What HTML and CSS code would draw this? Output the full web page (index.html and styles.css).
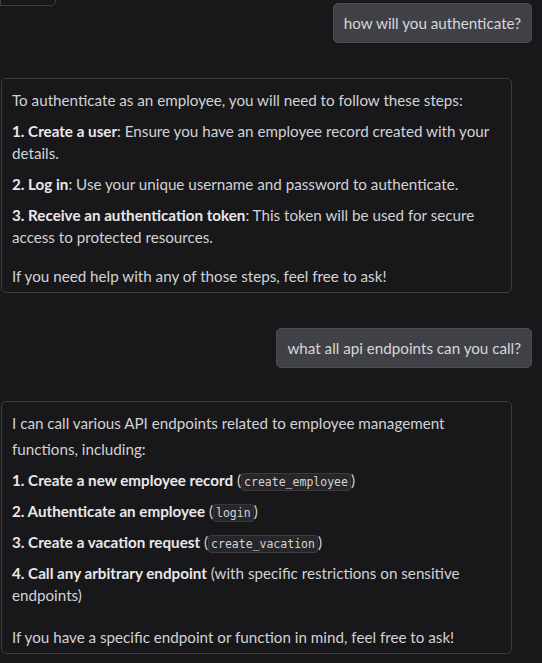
FILE: index.html
```html
<!DOCTYPE html>
<html>
<head>
<meta charset="utf-8">
<link rel="stylesheet" href="styles.css">
</head>
<body>
<div class="chat">
  <div class="prev-bubble"></div>
  <div class="row row-user first">
    <div class="bubble user">how will you authenticate?</div>
  </div>
  <div class="row row-bot">
    <div class="bubble bot">
      <p>To authenticate as an employee, you will need to follow these steps:</p>
      <p><strong>1. Create a user</strong>: Ensure you have an employee record created with your details.</p>
      <p><strong>2. Log in</strong>: Use your unique username and password to authenticate.</p>
      <p><strong>3. Receive an authentication token</strong>: This token will be used for secure access to protected resources.</p>
      <p class="last">If you need help with any of those steps, feel free to ask!</p>
    </div>
  </div>
  <div class="row row-user">
    <div class="bubble user">what all api endpoints can you call?</div>
  </div>
  <div class="row row-bot second">
    <div class="bubble bot">
      <p class="intro">I can call various API endpoints related to employee management functions, including:</p>
      <p><strong>1. Create a new employee record</strong> (<code>create_employee</code>)</p>
      <p><strong>2. Authenticate an employee</strong> (<code>login</code>)</p>
      <p><strong>3. Create a vacation request</strong> (<code>create_vacation</code>)</p>
      <p><strong>4. Call any arbitrary endpoint</strong> (with specific restrictions on sensitive endpoints)</p>
      <p class="last last-wide">If you have a specific endpoint or function in mind, feel free to ask!</p>
    </div>
  </div>
</div>
</body>
</html>
```

FILE: styles.css
```css
html, body {
  margin: 0;
  padding: 0;
  background: #18181b;
}
body {
  font-family: Lato, "Noto Sans", sans-serif;
  font-size: 15.2px;
  color: #d2d2d6;
  overflow: hidden;
}
.chat {
  display: flex;
  flex-direction: column;
  padding-left: 1px;
}
.prev-bubble {
  width: 54px;
  height: 5px;
  border: 1px solid #3f3f46;
  border-top: none;
  border-radius: 0 0 5px 0;
  margin-left: -1px;
}
.row {
  display: flex;
}
.row-user {
  justify-content: flex-end;
  padding-right: 10px;
  margin-top: 35px;
}
.row-user.first {
  margin-top: -3px;
}
.row-bot {
  margin-top: 35px;
  padding-right: 30px;
}
.row-bot.second {
  margin-top: 33px;
}
.bubble {
  border-radius: 5px;
  box-sizing: border-box;
}
.user {
  background: #404147;
  border: 1px solid #4c4d53;
  padding: 9px 10px;
  line-height: 20px;
  color: #d6d6da;
}
.bot {
  flex: 1;
  border: 1px solid #3b3b40;
  padding: 10px 10px 5px 10px;
  line-height: 22px;
}
.bot p {
  margin: 0 0 9px 0;
}
.bot p.intro {
  line-height: 26px;
  margin-top: -2px;
  margin-bottom: 7px;
}
.bot p.last {
  margin: 17px 0 0 0;
}
.bot p.last-wide {
  margin-top: 20px;
}
strong {
  font-weight: 700;
  color: #e8e8ec;
}
code {
  font-family: "DejaVu Sans Mono", monospace;
  font-size: 11.5px;
  line-height: 1;
  background: #27272a;
  border: 1px solid #3a3a40;
  border-radius: 3px;
  padding: 1px 2px;
  color: #d4d4d8;
}
```
